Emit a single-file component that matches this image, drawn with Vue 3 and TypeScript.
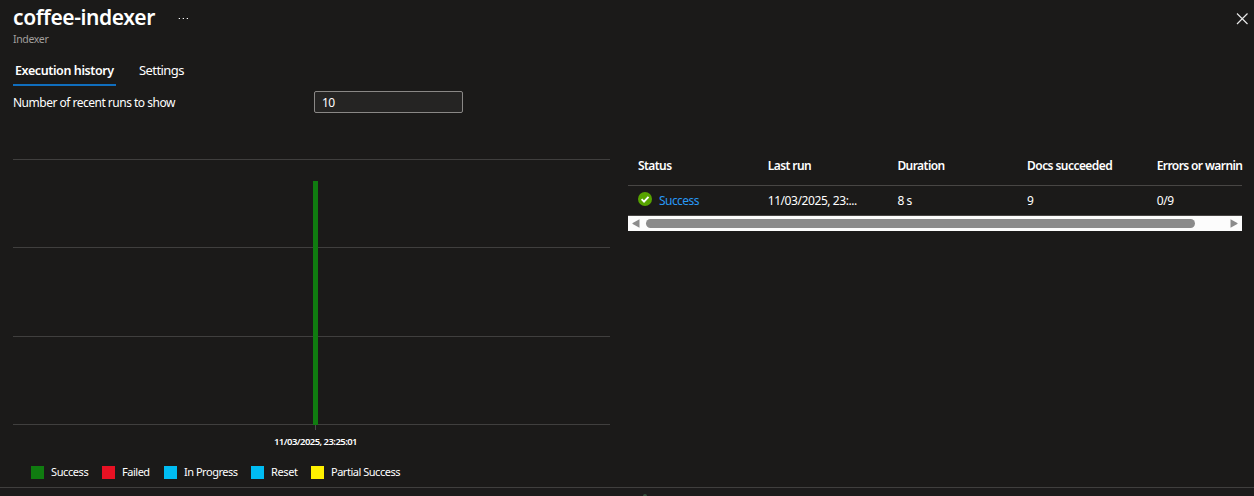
<script setup lang="ts">
interface LegendItem {
  label: string
  key: string
}

const legend: LegendItem[] = [
  { label: 'Success', key: 'success' },
  { label: 'Failed', key: 'failed' },
  { label: 'In Progress', key: 'progress' },
  { label: 'Reset', key: 'reset' },
  { label: 'Partial Success', key: 'partial' },
]

const columns: { label: string; key: string }[] = [
  { label: 'Status', key: 'status' },
  { label: 'Last run', key: 'last' },
  { label: 'Duration', key: 'duration' },
  { label: 'Docs succeeded', key: 'docs' },
  { label: 'Errors or warnin', key: 'errors' },
]
</script>

<template>
  <div class="blade">
    <header class="head">
      <div class="titles">
        <div class="title-row">
          <h1><span>coffee-indexer</span></h1>
          <svg class="more" width="12" height="4" viewBox="0 0 12 4">
            <path d="M1 1h1v1H1zM5 1h1v1H5zM9 1h1v1H9z" fill="#fff" />
            <path d="M0 1h1v1H0zM4 1h1v1H4zM8 1h1v1H8z" fill="#555" />
          </svg>
        </div>
        <p class="subtitle">Indexer</p>
      </div>
      <svg class="close" width="12" height="12" viewBox="0 0 12 12">
        <path d="M1 .5l10.5 10.5M11.5 .5L1 11" stroke="#e8e8e8" stroke-width="1.15" />
      </svg>
    </header>

    <nav class="tabs">
      <a class="tab active"><span>Execution history</span></a>
      <a class="tab settings"><span>Settings</span></a>
    </nav>

    <div class="field">
      <label><span>Number of recent runs to show</span></label>
      <div class="input"><span>10</span></div>
    </div>

    <main class="content">
      <section class="chart">
        <svg width="597" height="272" viewBox="0 0 597 272">
          <path d="M0 .5h597M0 88.5h597M0 177.5h597M0 265.5h597" stroke="#403f3e" />
          <path d="M302.5 266v5" stroke="#4a4948" />
          <rect x="300" y="22" width="5" height="244" fill="#107c10" />
        </svg>
        <div class="tick"><span>11/03/2025, 23:25:01</span></div>
        <ul class="legend">
          <li v-for="item in legend" :key="item.key" :class="item.key">
            <i></i><span>{{ item.label }}</span>
          </li>
        </ul>
      </section>

      <section class="runs">
        <div class="row header">
          <div v-for="c in columns" :key="c.key" class="cell" :class="c.key"><span>{{ c.label }}</span></div>
        </div>
        <div class="row body">
          <div class="cell link">
            <svg width="14" height="14" viewBox="0 0 14 14">
              <circle cx="7" cy="7" r="7" fill="#57a300" />
              <path d="M3.6 7.2l2.4 2.4 4.5-4.8" fill="none" stroke="#fff" stroke-width="1.9" />
            </svg>
            <span>Success</span>
          </div>
          <div class="cell date"><span>11/03/2025, 23:...</span></div>
          <div class="cell"><span>8 s</span></div>
          <div class="cell"><span>9</span></div>
          <div class="cell"><span>0/9</span></div>
        </div>
        <div class="scrollbar">
          <svg width="8" height="9" viewBox="0 0 8 9"><path d="M7.5.3v8.4L.7 5.1Q0 4.5.7 3.9z" fill="#8b8b8b" /></svg>
          <div class="thumb"></div>
          <svg width="8" height="9" viewBox="0 0 8 9"><path d="M.5.3v8.4l6.8-3.6Q8 4.5 7.3 3.9z" fill="#8b8b8b" /></svg>
        </div>
      </section>
    </main>
    <footer><i></i></footer>
  </div>
</template>

<style>
html, body { margin: 0; background: #1b1a19; }
</style>

<style scoped>
.blade {
  box-sizing: border-box;
  width: 1254px;
  height: 496px;
  overflow: hidden;
  background: #1b1a19;
  color: #fff;
  font: 12px/16px "Noto Sans", "Open Sans", sans-serif;
  white-space: nowrap;
}
h1, p, ul { margin: 0; padding: 0; }
.head { display: flex; justify-content: space-between; height: 58px; padding: 0 6px 0 13px; }
.title-row { display: flex; align-items: center; height: 32px; padding-top: 1px; }
h1 { width: 165px; font-size: 21px; line-height: 32px; font-weight: 600; letter-spacing: -0.4px; }
.more { margin-top: 3px; }
.subtitle { color: #a19f9d; font-size: 10.5px; line-height: 12px; letter-spacing: -0.35px; }
.close { margin-top: 13px; }
.tabs { display: flex; height: 28px; padding-left: 13px; }
.tab { box-sizing: border-box; height: 28px; line-height: 24px; font-size: 13px; letter-spacing: -0.58px; }
.active { width: 103px; padding-left: 2px; border-bottom: 2px solid #106ebe; font-weight: 600; font-size: 12.5px; line-height: 25px; letter-spacing: -0.4px; }
.settings { margin-left: 23px; }
.field { display: flex; padding: 5px 0 0 13px; height: 68px; }
label { width: 301px; line-height: 23px; letter-spacing: -0.5px; }
.input {
  box-sizing: border-box;
  width: 149px;
  height: 22px;
  padding-left: 7px;
  border: 1px solid #8a8886;
  border-radius: 2px;
  background: #252423;
  line-height: 21px;
  letter-spacing: -0.5px;
}
.content { display: flex; height: 328px; padding-left: 13px; }
.chart { width: 615px; }
.chart > svg { display: block; }
.tick { width: 605px; height: 20px; text-align: center; font-size: 9.5px; line-height: 21px; font-weight: 600; letter-spacing: -0.55px; }
.legend { display: flex; padding: 13px 0 0 18px; list-style: none; font-size: 11px; letter-spacing: -0.48px; }
.legend li { display: flex; align-items: center; height: 16px; }
.legend i { width: 13px; height: 13px; margin-right: 7px; background: #107c10; }
.legend .success { width: 71px; letter-spacing: -0.4px; }
.legend .failed { width: 62px; }
.legend .progress { width: 87px; }
.legend .reset { width: 60px; letter-spacing: -0.35px; }
.failed i { background: #e81123; }
.progress i, .reset i { background: #00bcf2; }
.partial i { background: #fff100; }
.runs { width: 614px; }
.row { display: grid; grid-template-columns: repeat(5, 129.7px); width: 604px; padding-left: 10px; border-bottom: 1px solid #484644; }
.header { height: 26px; font-weight: 600; line-height: 14px; letter-spacing: -0.56px; }
.header .errors { letter-spacing: -0.6px; }
.body { height: 29px; line-height: 30px; letter-spacing: -0.42px; }
.link { display: flex; letter-spacing: -0.55px; color: #2899f5; }
.link svg { margin: 6px 7px 0 0; }
.scrollbar { display: flex; align-items: center; justify-content: space-between; height: 15px; padding: 0 4px; background: #fcfcfc; }
.thumb { width: 549px; height: 9px; margin-right: 30px; border-radius: 5px; background: #8b8b8b; }
footer { height: 8px; border-top: 1px solid #403f3e; background: #1c1b1b; }
footer i { display: block; width: 4px; height: 2px; margin: 6px 0 0 643px; border-radius: 2px 2px 0 0; background: #35513d; }
</style>
